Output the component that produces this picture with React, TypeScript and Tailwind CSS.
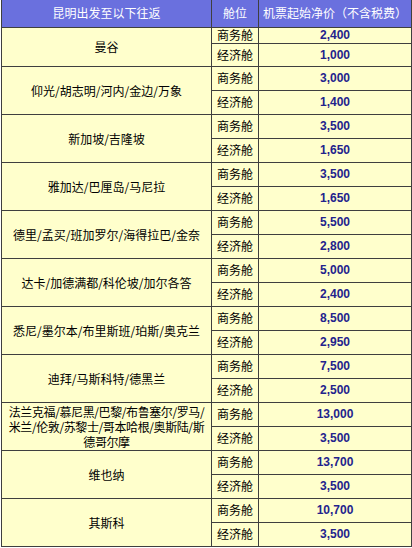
import React from "react";

type Group = { name: React.ReactNode; biz: string; eco: string };

const groups: Group[] = [
  { name: "曼谷", biz: "2,400", eco: "1,000" },
  { name: "仰光/胡志明/河内/金边/万象", biz: "3,000", eco: "1,400" },
  { name: "新加坡/吉隆坡", biz: "3,500", eco: "1,650" },
  { name: "雅加达/巴厘岛/马尼拉", biz: "3,500", eco: "1,650" },
  { name: "德里/孟买/班加罗尔/海得拉巴/金奈", biz: "5,500", eco: "2,800" },
  { name: "达卡/加德满都/科伦坡/加尔各答", biz: "5,000", eco: "2,400" },
  { name: "悉尼/墨尔本/布里斯班/珀斯/奥克兰", biz: "8,500", eco: "2,950" },
  { name: "迪拜/马斯科特/德黑兰", biz: "7,500", eco: "2,500" },
  {
    name: (
      <span className="block whitespace-nowrap tracking-[-0.4px]">
        法兰克福/慕尼黑/巴黎/布鲁塞尔/罗马/
        <br />
        米兰/伦敦/苏黎士/哥本哈根/奥斯陆/斯
        <br />
        德哥尔摩
      </span>
    ),
    biz: "13,000",
    eco: "3,500",
  },
  { name: "维也纳", biz: "13,700", eco: "3,500" },
  { name: "其斯科", biz: "10,700", eco: "3,500" },
];

const cell = "border border-[#3f3f3f] p-0 text-center align-middle";
const price =
  "font-bold text-[12px] text-[#23238c] [font-family:'Liberation_Sans',Arial,sans-serif]";

export default function App() {
  return (
    <div
      className="w-[412px] h-[548px] bg-white overflow-hidden"
      style={{ fontFamily: "'Noto Sans CJK SC', sans-serif" }}
    >
      <table className="table-fixed border-collapse ml-px w-[410px] text-[12px] text-black bg-[#ffffcc]">
        <colgroup>
          <col className="w-[210px]" />
          <col className="w-[47px]" />
          <col className="w-[153px]" />
        </colgroup>
        <thead>
          <tr className="h-[27px]">
            <th className={`${cell} border-t-0 bg-[#6a70de] text-white font-normal`}>
              昆明出发至以下往返
            </th>
            <th className={`${cell} border-t-0 bg-[#6a70de] text-white font-normal`}>
              舱位
            </th>
            <th className={`${cell} border-t-0 bg-[#6a70de] text-white font-normal`}>
              机票起始净价（不含税费）
            </th>
          </tr>
        </thead>
        <tbody>
          {groups.map((g, i) => (
            <React.Fragment key={i}>
              <tr className={i === 0 ? "h-[16px]" : "h-[24px]"}>
                <td rowSpan={2} className={`${cell} leading-[15px]`}>
                  {g.name}
                </td>
                <td className={`${cell} leading-[14px]`}>商务舱</td>
                <td className={`${cell} leading-[14px] ${price}`}>{g.biz}</td>
              </tr>
              <tr className={i === 0 ? "h-[23px]" : "h-[24px]"}>
                <td className={`${cell} leading-[14px]`}>经济舱</td>
                <td className={`${cell} leading-[14px] ${price}`}>{g.eco}</td>
              </tr>
            </React.Fragment>
          ))}
        </tbody>
      </table>
    </div>
  );
}
